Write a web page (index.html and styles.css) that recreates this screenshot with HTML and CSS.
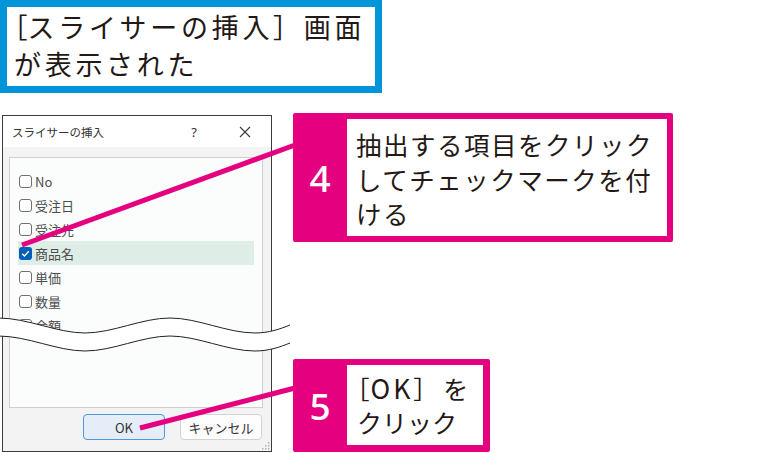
FILE: index.html
```html
<!DOCTYPE html>
<html lang="ja">
<head>
<meta charset="utf-8">
<title>スライサーの挿入</title>
<link rel="stylesheet" href="styles.css">
</head>
<body>
<div class="canvas">
  <div class="left">
    <div class="caption"><span class="ob">［</span>スライサーの挿入］画面<br>が表示された</div>
    <div class="dialog">
      <div class="titlebar">
        <span class="title">スライサーの挿入</span>
        <span class="help">?</span>
        <svg class="close" viewBox="0 0 12 12" width="12" height="12"><path d="M1 1L11 11M11 1L1 11" stroke="#3a3a3a" stroke-width="1.1" fill="none"/></svg>
      </div>
      <div class="body">
        <div class="list">
          <div class="item"><span class="cb"></span>No</div>
          <div class="item"><span class="cb"></span>受注日</div>
          <div class="item"><span class="cb"></span>受注先</div>
          <div class="item sel"><span class="cb on"><svg viewBox="0 0 13 13" width="13" height="13"><path d="M3.2 6.8L5.4 9L9.8 4.3" stroke="#fff" stroke-width="1.3" fill="none"/></svg></span>商品名</div>
          <div class="item"><span class="cb"></span>単価</div>
          <div class="item"><span class="cb"></span>数量</div>
          <div class="item"><span class="cb"></span>金額</div>
        </div>
        <div class="buttons">
          <button class="btn ok">OK</button>
          <button class="btn">キャンセル</button>
        </div>
        <svg class="grip" viewBox="0 0 9 9" width="9" height="9"><g fill="#b5b5b5"><rect x="7" y="1" width="1.5" height="1.5"/><rect x="4" y="4" width="1.5" height="1.5"/><rect x="7" y="4" width="1.5" height="1.5"/><rect x="1" y="7" width="1.5" height="1.5"/><rect x="4" y="7" width="1.5" height="1.5"/><rect x="7" y="7" width="1.5" height="1.5"/></g></svg>
      </div>
    </div>
  </div>

  <svg class="overlay" viewBox="0 0 783 453" width="783" height="453">
    <path d="M-2,318 C28,318 57,333 85,333 C113,333 142,318 170,318 C198,318 227,333 255,333 C269,333 280,329 290,325 L290,343 C280,347 269,351 255,351 C227,351 198,336 170,336 C142,336 113,351 85,351 C57,351 28,336 -2,336 Z" fill="#fff"/>
    <path d="M-2,318 C28,318 57,333 85,333 C113,333 142,318 170,318 C198,318 227,333 255,333 C269,333 280,329 290,325" fill="none" stroke="#222" stroke-width="1"/>
    <path d="M-2,336 C28,336 57,351 85,351 C113,351 142,336 170,336 C198,336 227,351 255,351 C269,351 280,347 290,343" fill="none" stroke="#222" stroke-width="1"/>
    <line x1="295" y1="145" x2="22" y2="245" stroke="#e4007f" stroke-width="5"/>
    <line x1="295" y1="388" x2="140" y2="428" stroke="#e4007f" stroke-width="5"/>
  </svg>

  <div class="callout c4">
    <div class="num">4</div>
    <div class="txt">抽出する項目をクリック<br>してチェックマークを付<br>ける</div>
  </div>
  <div class="callout c5">
    <div class="num">5</div>
    <div class="txt t5"><span class="ob">［</span><span class="wide">OK</span><span class="cl">］</span>を<br>クリック</div>
  </div>
</div>
</body>
</html>
```

FILE: styles.css
```css
body {
  margin: 0;
  background: #fff;
  font-family: "Noto Sans CJK JP", "Noto Sans", sans-serif;
}

.canvas {
  position: relative;
  width: 783px;
  height: 453px;
  overflow: hidden;
}

.left {
  display: flex;
  flex-direction: column;
  align-items: flex-start;
}

.caption {
  box-sizing: border-box;
  width: 382px;
  height: 93px;
  border: 7px solid #0095d9;
  padding: 2px 0 0 7px;
  font-size: 27px;
  letter-spacing: 3.7px;
  line-height: 36.5px;
  color: #231815;
  white-space: nowrap;
}

.ob {
  margin-left: -0.5em;
  letter-spacing: 0;
}

.dialog {
  position: relative;
  margin: 22px 0 0 2px;
  width: 270px;
  height: 337px;
  box-sizing: border-box;
  border: 1px solid #3c3c3c;
  background: #f3f3f3;
  display: flex;
  flex-direction: column;
}

.titlebar {
  height: 31px;
  flex: none;
  background: #fff;
  display: flex;
  align-items: center;
  padding-left: 9px;
  font-size: 11.5px;
  color: #333;
}

.help {
  margin-left: auto;
  margin-right: 42px;
  font-family: "Noto Sans", sans-serif;
  font-size: 13px;
}

.close {
  margin-right: 20px;
}

.body {
  flex: 1;
  padding: 10px 0 0 6px;
}

.list {
  box-sizing: border-box;
  width: 254px;
  height: 251px;
  border: 1px solid #cfcfcf;
  background: #fbfdfc;
  padding: 11px 8px 0 8px;
  overflow: hidden;
}

.item {
  height: 24px;
  display: flex;
  align-items: center;
  gap: 3px;
  padding-left: 1px;
  font-size: 13px;
  color: #4d4d4d;
}

.item.sel {
  background: #deeee6;
}

.cb {
  width: 13px;
  height: 13px;
  box-sizing: border-box;
  border: 1px solid #707070;
  border-radius: 3px;
  background: #fff;
  display: flex;
}

.cb.on {
  background: #005fb8;
  border-color: #005fb8;
  border-width: 0;
}

.buttons {
  display: flex;
  gap: 15px;
  padding: 6px 0 0 74px;
}

.btn {
  width: 82px;
  height: 26px;
  box-sizing: border-box;
  padding: 0;
  border-radius: 4px;
  border: 1px solid #d3d3d3;
  background: #fdfdfd;
  font-family: "Noto Sans CJK JP", "Noto Sans", sans-serif;
  font-size: 13px;
  color: #333;
}

.btn.ok {
  background: #e5eef8;
  border-color: #4a9ae0;
}

.grip {
  position: absolute;
  right: 1px;
  bottom: 1px;
}

.overlay {
  position: absolute;
  left: 0;
  top: 0;
}

.callout {
  position: absolute;
  display: flex;
  box-sizing: border-box;
  background: #e4007f;
  border-radius: 2px;
}

.c4 {
  left: 293px;
  top: 113px;
  width: 380px;
  height: 129px;
  padding: 6px 6px 6px 0;
}

.c5 {
  left: 293px;
  top: 359px;
  width: 197px;
  height: 93px;
  padding: 6px 7px 7px 0;
}

.num {
  width: 54px;
  flex: none;
  display: flex;
  align-items: center;
  justify-content: center;
  color: #fff;
  font-family: "Noto Sans", sans-serif;
  font-weight: 500;
  font-size: 37px;
}

.txt {
  flex: 1;
  background: #fff;
  color: #231815;
  font-size: 25.5px;
  letter-spacing: 1.5px;
  line-height: 34.5px;
  padding: 8px 0 0 9px;
  white-space: nowrap;
}

.txt.t5 {
  font-size: 25px;
  letter-spacing: 0;
  line-height: 33.5px;
  padding: 6px 0 0 10px;
}

.wide {
  font-size: 26.5px;
  letter-spacing: 3px;
  margin-left: 1px;
}

.cl {
  letter-spacing: 5px;
}
```
